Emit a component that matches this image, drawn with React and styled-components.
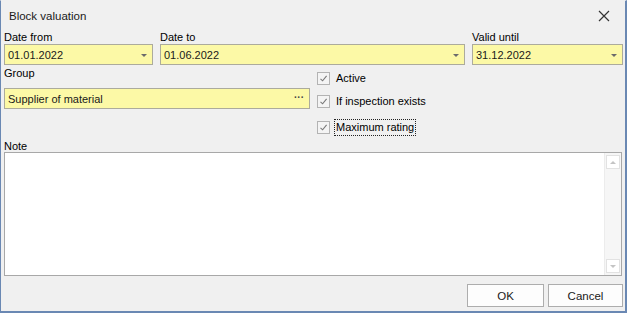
import React from "react";
import styled, { createGlobalStyle } from "styled-components";

const GlobalStyle = createGlobalStyle`
  html, body { margin: 0; padding: 0; background: #f0f0f0; }
  * { box-sizing: border-box; }
`;

const Window = styled.div`
  width: 627px;
  height: 313px;
  display: flex;
  flex-direction: column;
  background: #f0f0f0;
  border: 1px solid #6a88b3;
  border-top-color: #f0f0f0;
  border-right-width: 2px;
  border-bottom-width: 2px;
  font-family: "Liberation Sans", Arial, sans-serif;
  font-size: 11px;
  color: #000;
`;

const TitleBar = styled.div`
  height: 30px;
  flex: none;
  display: flex;
  align-items: center;
  justify-content: space-between;
  padding: 0 13px 0 8px;
  font-size: 11.5px;
  color: #1a1a1a;
`;

const CloseButton = styled.button`
  width: 16px;
  height: 16px;
  padding: 0;
  border: none;
  background: transparent;
  display: flex;
  align-items: center;
  justify-content: center;
`;

const Body = styled.div`
  flex: 1;
  display: flex;
  flex-direction: column;
  padding: 0 2px 0 3px;
`;

const DateRow = styled.div`
  display: grid;
  grid-template-columns: 149px 305px 151px;
  column-gap: 7px;
`;

const Field = styled.div`
  display: flex;
  flex-direction: column;
`;

const Label = styled.div`
  line-height: 13px;
  height: 13px;
  white-space: nowrap;
`;

const Input = styled.div`
  height: 21px;
  margin-top: ${(p) => p.$gap || 0}px;
  display: flex;
  align-items: center;
  justify-content: space-between;
  background: #fcf9a6;
  border: 1px solid #acab9c;
  padding: 0 5px 0 3px;
  color: #1a1a1a;
`;

const Arrow = styled.span`
  width: 0;
  height: 0;
  border-left: 3px solid transparent;
  border-right: 3px solid transparent;
  border-top: 3px solid #6b6b6b;
  margin-top: 1px;
`;

const Dots = styled.span`
  font-size: 10px;
  color: #444;
  font-weight: bold;
  margin-top: -3px;
`;

const MiddleRow = styled.div`
  display: grid;
  grid-template-columns: 306px 1fr;
  column-gap: 7px;
  margin-top: 2px;
`;

const Checks = styled.div`
  display: flex;
  flex-direction: column;
`;

const CheckRow = styled.div`
  display: flex;
  align-items: center;
  height: 16px;
  margin-top: ${(p) => p.$top}px;
`;

const Box = styled.span`
  width: 13px;
  height: 13px;
  border: 1px solid #b3b3b3;
  background: #f4f4f4;
  display: flex;
  align-items: center;
  justify-content: center;
  margin-right: 4px;
  flex: none;
`;

const CheckText = styled.span`
  padding: 1px 1px;
  border: 1px dotted ${(p) => (p.$focus ? "#222" : "transparent")};
  line-height: 13px;
`;

const NoteLabel = styled(Label)`
  margin-top: 5px;
  height: 12px;
  line-height: 12px;
`;

const NoteArea = styled.div`
  height: 124px;
  background: #fff;
  border: 1px solid #a8a8a8;
  display: flex;
  justify-content: flex-end;
  margin-right: 1px;
`;

const ScrollBar = styled.div`
  width: 17px;
  display: flex;
  flex-direction: column;
  justify-content: space-between;
  align-items: center;
  padding: 2px 0;
  background: #f6f6f6;
  border-left: 1px solid #ececec;
`;

const ScrollArrow = styled.span`
  width: 14px;
  height: 14px;
  background: #fff;
  border: 1px solid #e2e2e2;
  display: flex;
  align-items: center;
  justify-content: center;
  &::after {
    content: "";
    width: 0;
    height: 0;
    border-left: 3px solid transparent;
    border-right: 3px solid transparent;
    ${(p) => (p.$up ? "border-bottom" : "border-top")}: 3px solid #c4c4c4;
  }
`;

const Footer = styled.div`
  display: flex;
  justify-content: flex-end;
  gap: 4px;
  margin-top: 8px;
`;

const Button = styled.button`
  width: ${(p) => p.$w}px;
  height: 23px;
  background: #fdfdfd;
  border: 1px solid #adadad;
  font-family: inherit;
  font-size: 11.5px;
  color: #1a1a1a;
  padding: 0;
`;

const Check = () => (
  <svg width="9" height="9" viewBox="0 0 9 9">
    <path d="M1.5 4.8 L3.6 6.8 L7.6 1.8" fill="none" stroke="#7a7a7a" strokeWidth="1.1" />
  </svg>
);

const CheckItem = ({ label, top, focus }) => (
  <CheckRow $top={top}>
    <Box>
      <Check />
    </Box>
    <CheckText $focus={focus}>{label}</CheckText>
  </CheckRow>
);

const DateField = ({ label, value }) => (
  <Field>
    <Label>{label}</Label>
    <Input>
      <span>{value}</span>
      <Arrow />
    </Input>
  </Field>
);

export default function App() {
  return (
    <>
      <GlobalStyle />
      <Window>
        <TitleBar>
          <span>Block valuation</span>
          <CloseButton>
            <svg width="12" height="12" viewBox="0 0 12 12">
              <path d="M1 1 L11 11 M11 1 L1 11" stroke="#333" strokeWidth="1.2" />
            </svg>
          </CloseButton>
        </TitleBar>
        <Body>
          <DateRow>
            <DateField label="Date from" value="01.01.2022" />
            <DateField label="Date to" value="01.06.2022" />
            <DateField label="Valid until" value="31.12.2022" />
          </DateRow>
          <MiddleRow>
            <Field>
              <Label>Group</Label>
              <Input $gap={8}>
                <span>Supplier of material</span>
                <Dots>···</Dots>
              </Input>
            </Field>
            <Checks>
              <CheckItem label="Active" top={3} />
              <CheckItem label="If inspection exists" top={7} />
              <CheckItem label="Maximum rating" top={10} focus />
            </Checks>
          </MiddleRow>
          <NoteLabel>Note</NoteLabel>
          <NoteArea>
            <ScrollBar>
              <ScrollArrow $up />
              <ScrollArrow />
            </ScrollBar>
          </NoteArea>
          <Footer>
            <Button $w={77}>OK</Button>
            <Button $w={75}>Cancel</Button>
          </Footer>
        </Body>
      </Window>
    </>
  );
}
